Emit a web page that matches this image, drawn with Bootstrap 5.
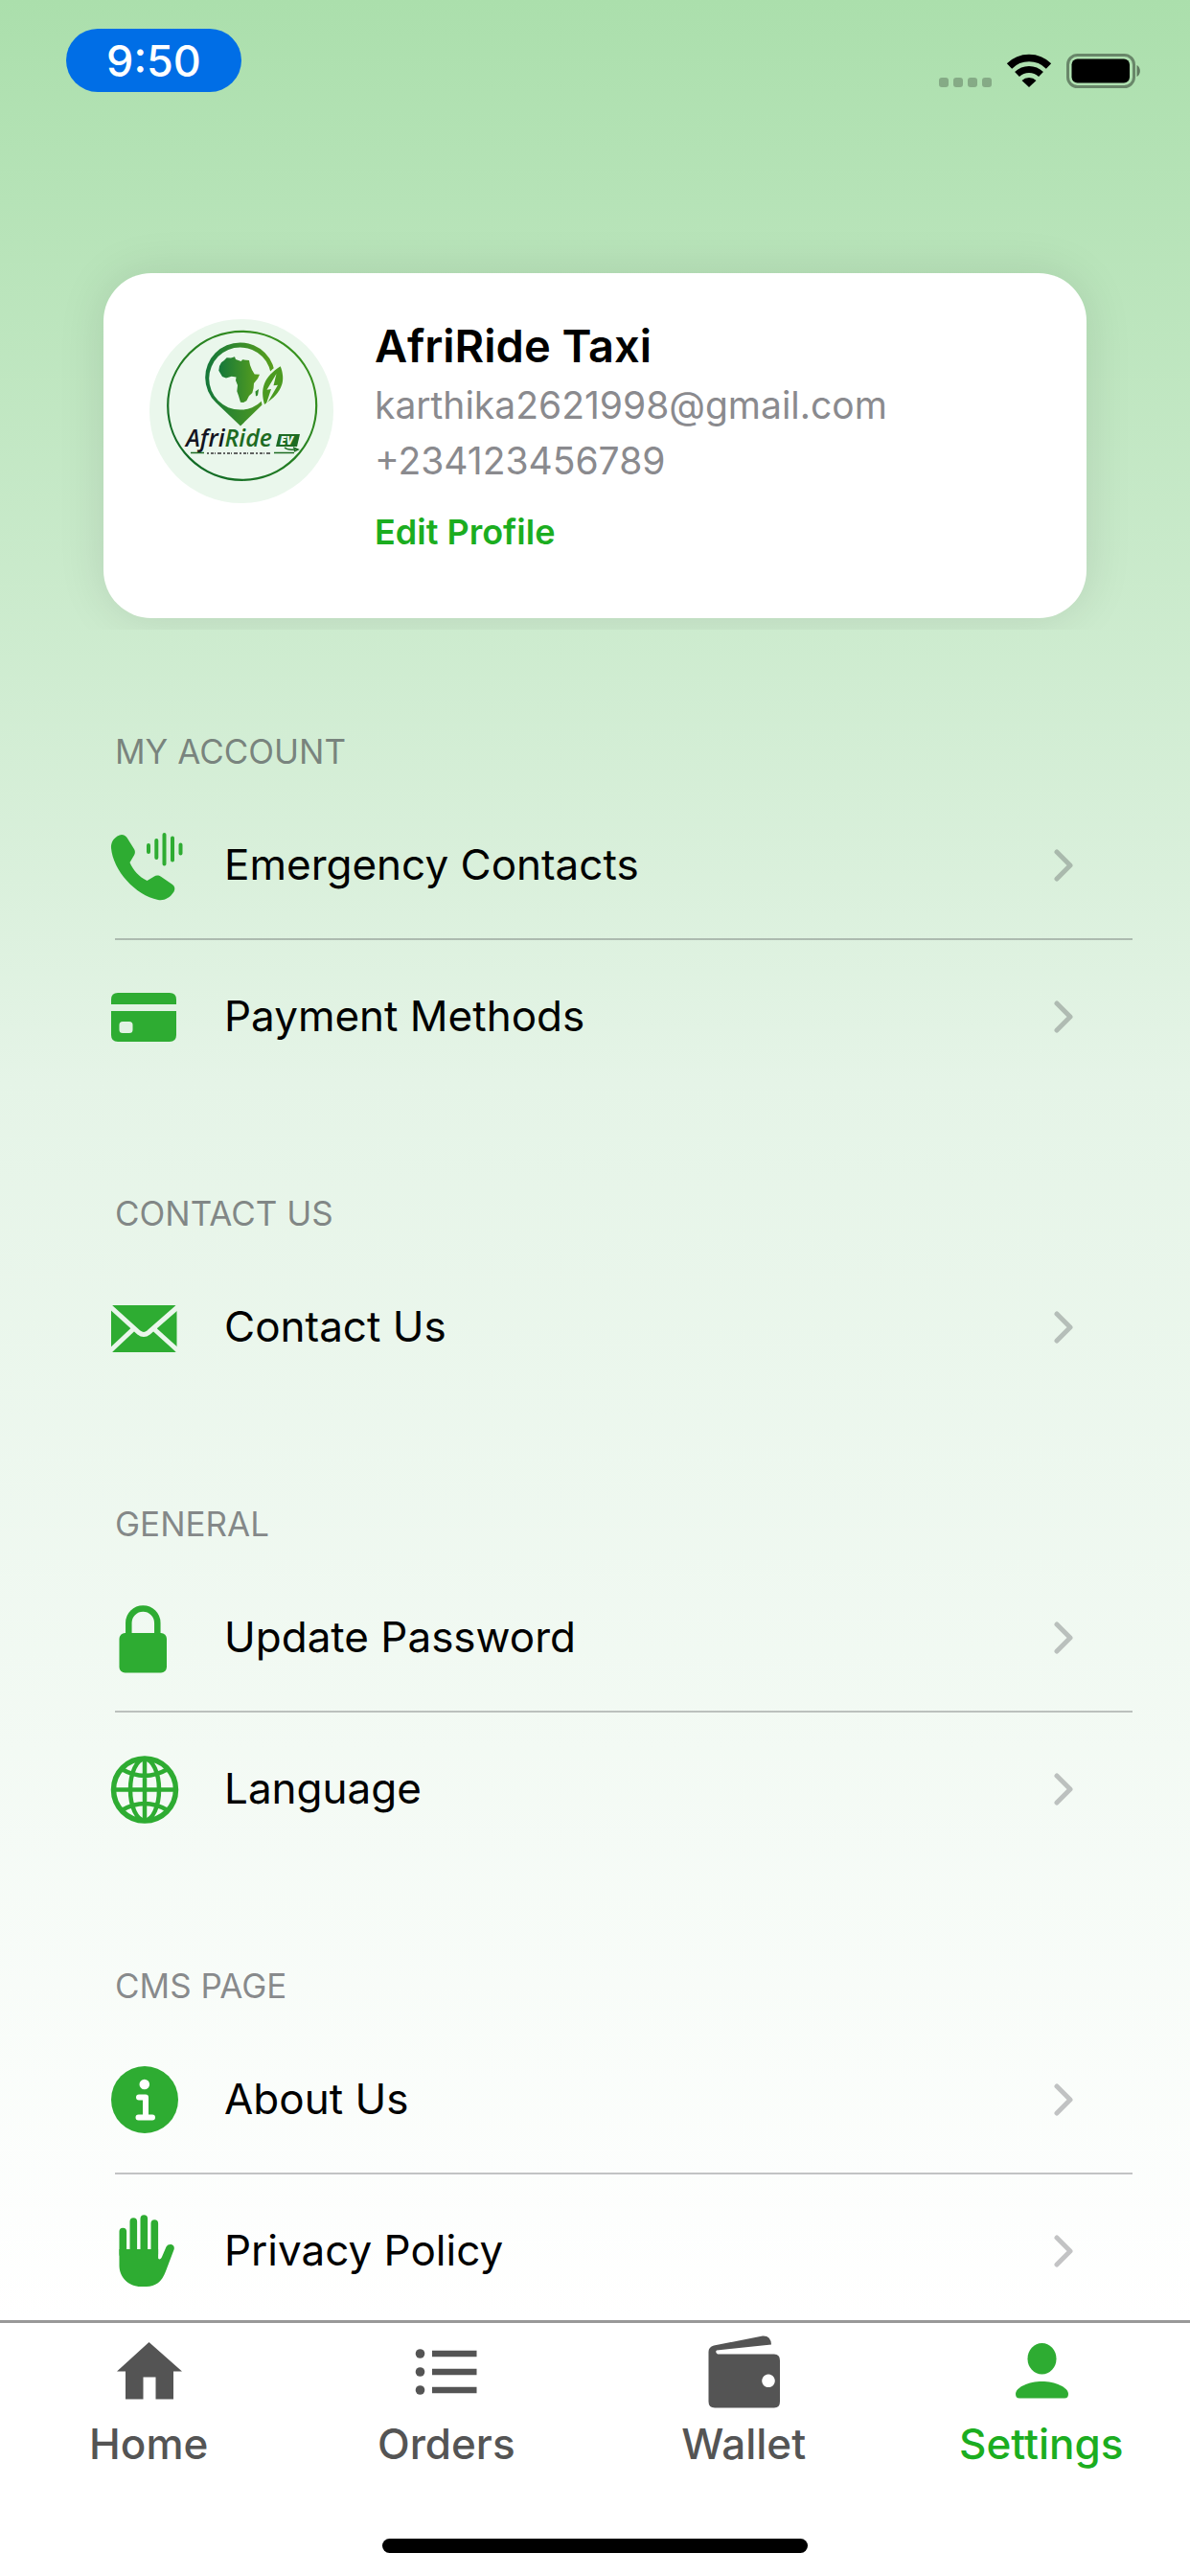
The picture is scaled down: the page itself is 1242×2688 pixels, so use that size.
<!DOCTYPE html>
<html lang="en">
<head>
  <meta charset="UTF-8" />
  <title>Settings - AfriRide Taxi</title>
  <meta name="viewport" content="width=device-width, initial-scale=1">
  <link href="https://cdn.jsdelivr.net/npm/bootstrap@5.3.3/dist/css/bootstrap.min.css" rel="stylesheet">
  <style>
    body {
      min-height: 100vh;
      font-family: Inter, "Liberation Sans", sans-serif;
      color: #000;
      background: linear-gradient(#abdfac 0%, #e5f4e7 42%, #ffffff 90%) no-repeat;
    }
    a { text-decoration: none; }
    svg { display: block; flex: none; }

    .status-bar { height: 125px; padding: 30px 52px 0 69px; }
    .time-pill { width: 183px; height: 66px; background: #006ee6; font-size: 45px; line-height: 67px; font-weight: 500; }
    .status-icons { gap: 15px; margin-top: 26px; }

    .profile-wrap { padding: 160px 108px 12px; overflow: hidden; }
    .profile-card { border-radius: 50px; padding: 48px 48px 68px; gap: 43px; box-shadow: 0 0 50px rgba(0, 0, 0, .1); }
    .profile-name { font-size: 47px; line-height: 56px; font-weight: 600; margin-bottom: 5px; }
    .profile-line { font-size: 39px; line-height: 58px; color: #8a8a8e; }
    .edit-link { font-size: 36px; line-height: 44px; font-weight: 600; color: #1bad20; margin-top: 23px; }

    .group-title { height: 166px; padding: 0 120px 17px; font-size: 35px; line-height: 44px; font-weight: 400; color: rgba(60, 60, 67, .6); }
    .menu-list { padding: 0 60px 0 111px; }
    .menu-row { height: 158px; padding-right: 61px; gap: 43px; font-size: 44px; line-height: 56px; color: #000; }
    .menu-line { height: 2px; margin: -2px 0 0 9px; background: rgba(60, 60, 67, .3); }
    .menu-icon { width: 80px; height: 80px; color: #2eac32; }
    .chevron { color: rgba(60, 60, 67, .3); }

    .page-end { height: 240px; }
    .tab-bar { border-top: 3px solid #999; background: #fff; padding-top: 10px; }
    .tab-link { color: #545454; font-size: 44px; line-height: 54px; font-weight: 500; gap: 9px; }
    .tab-link.active { color: #2eac32; }
    .tab-link.active span { color: #1bad20; }
    .home-line { width: 444px; height: 15px; margin: 72px auto 24px; background: #000; }
  </style>
</head>
<body>
  <header class="status-bar d-flex justify-content-between align-items-start">
    <div class="time-pill rounded-pill text-white text-center">9:50</div>
    <div class="status-icons d-flex align-items-end">
      <svg width="55" height="36" viewBox="0 0 55 36" fill="#000" fill-opacity=".24">
        <rect x="0" y="25" width="10" height="10" rx="3"/><rect x="15" y="25" width="10" height="10" rx="3"/>
        <rect x="30" y="25" width="10" height="10" rx="3"/><rect x="45" y="25" width="10" height="10" rx="3"/>
      </svg>
      <svg width="48" height="36" viewBox="0 0 48 36">
        <path d="M3.500 13 A29 29 0 0 1 44.500 13" fill="none" stroke="#000" stroke-width="7.500"/>
        <path d="M11.500 21.500 A18 18 0 0 1 36.500 21.500" fill="none" stroke="#000" stroke-width="7"/>
        <path d="M24 35 L16.500 28 A11 11 0 0 1 31.500 28 Z"/>
      </svg>
      <svg width="77" height="36" viewBox="0 0 77 36">
        <rect x="1.500" y="1.500" width="69" height="33" rx="10" fill="none" stroke="#000" stroke-opacity=".4" stroke-width="3"/>
        <rect x="5.500" y="5.500" width="60.500" height="25" rx="6"/>
        <path d="M73.500 12 C78 14 78 22 73.500 24 Z" fill-opacity=".45"/>
      </svg>
    </div>
  </header>

  <main>
    <section class="profile-wrap">
      <div class="profile-card bg-white d-flex align-items-start">
        <svg width="192" height="192" viewBox="0 0 192 192" role="img" aria-label="AfriRide EV logo">
          <defs>
            <linearGradient id="leafGreen" x1="0" y1="0" x2="1" y2="0">
              <stop offset="0" stop-color="#14773a"/><stop offset="1" stop-color="#5aa01c"/>
            </linearGradient>
            <linearGradient id="ringGreen" x1="0" y1="1" x2="1" y2="0">
              <stop offset="0" stop-color="#0b6428"/><stop offset="1" stop-color="#3f9a1c"/>
            </linearGradient>
          </defs>
          <circle cx="96" cy="96" r="96" fill="#eaf7ec"/>
          <circle cx="96.700" cy="90.300" r="77.500" fill="none" stroke="url(#ringGreen)" stroke-width="2.200"/>
          <!-- map pin -->
          <path fill="url(#leafGreen)" fill-rule="evenodd" d="M95 111.500 L69.300 87.100 A36.500 36.500 0 1 1 120.100 87.100 Z M94.700 29.600 A32.500 32.500 0 1 0 94.700 94.600 A32.500 32.500 0 1 0 94.700 29.600 Z"/>
          <path fill="url(#leafGreen)" d="M72.300 53.700 L73 49 L75 45.300 L78 43 L80.700 40.300 L85 40.500 L89 39.300 L90 42 L95.700 44 L97 42.300 L104 43 L105 48 L107 53 L109.700 57.400 L115 57.700 L113 62 L109 67 L108.600 72 L107.300 77 L104 80 L101.300 85.300 L98 87 L95 86.700 L93 80 L91.300 75.300 L92 69 L90 64 L90.500 60.500 L85.700 59.700 L80 61.500 L76 60 Z"/>
          <path fill="#2e8a2c" d="M110.500 75.500 L114 73 L113 79.500 L111 80.500 Z"/>
          <path d="M136.700 49.300 C142 63 140 76 120 89 C115 72 120 60 136.700 49.300 Z" fill="#4a9a20" stroke="#eaf7ec" stroke-width="5" paint-order="stroke"/>
          <path d="M132.500 57 L122.500 73.700 L127 73 L121 91 L134 68.700 L129.500 69.300 Z" fill="#eaf7ec"/>
          <!-- wordmark -->
          <text x="38" y="133" font-family="Open Sans, sans-serif" font-size="25" font-style="italic" font-weight="600" fill="#141421">Afri<tspan fill="#1d6b22">Ride</tspan></text>
          <path d="M135 120 H157 L154 133 H132 Z" fill="#1d6b22"/>
          <text x="136" y="131" font-family="Open Sans, sans-serif" font-size="12" font-style="italic" font-weight="800" fill="#eaf7ec">EV</text>
          <path d="M141 134 Q144 137 152 136 M150 134 L155 136 L151 138" fill="none" stroke="#1d6b22" stroke-width="1.500"/>
          <path d="M43 139.500 H57 M130 139.500 H151" stroke="#1d6b22" stroke-width="1.500"/>
          <path d="M60 140 H127" stroke="#333" stroke-width="1.500" stroke-dasharray="2 2 3 1 1 2 4 2"/>
        </svg>
        <div>
          <h1 class="profile-name">AfriRide Taxi</h1>
          <div class="profile-line">karthika2621998@gmail.com</div>
          <div class="profile-line">+234123456789</div>
          <a href="#edit" class="edit-link d-block">Edit Profile</a>
        </div>
      </div>
    </section>

    <section>
      <h2 class="group-title d-flex align-items-end m-0">MY ACCOUNT</h2>
      <div class="menu-list">
        <a href="#emergency" class="menu-row d-flex align-items-center">
          <svg class="menu-icon" viewBox="0 0 80 80" fill="currentColor">
            <path d="M11.500 10.500 C15 8 19 8.500 21.500 12 L29 24 C30.200 26 30.200 28 29.200 30 L24.500 38 C28 46 34 53 42.500 57 L50 52.500 C52 51 55 51.300 57 52.800 L69 61 C71.500 63 72 65.500 70.500 68.500 C66 75.500 60 78 54 77 C30 72 7 46 5 23 C4.600 17.500 7 13.500 11.500 10.500 Z"/>
            <path d="M44 20 V27 M52.300 15 V33 M60.500 9 V39.500 M69 12.500 V35.500 M77.500 19.500 V28.500" fill="none" stroke="currentColor" stroke-width="4" stroke-linecap="round"/>
          </svg>
          <span class="flex-grow-1">Emergency Contacts</span>
          <svg class="chevron" width="22" height="36" viewBox="0 0 22 36"><path d="M4 5 L18 19 L4 33" fill="none" stroke="currentColor" stroke-width="5" stroke-linecap="round" stroke-linejoin="round"/></svg>
        </a>
        <div class="menu-line"></div>
        <a href="#payment" class="menu-row d-flex align-items-center">
          <svg class="menu-icon" viewBox="0 0 80 80" fill="currentColor">
            <path d="M5 28 V23 Q5 16 12 16 H66 Q73 16 73 23 V28 Z"/>
            <path fill-rule="evenodd" d="M5 35 H73 V60 Q73 67 66 67 H12 Q5 67 5 60 Z M17 46 Q13.500 46 13.500 49.500 V54.500 Q13.500 58 17 58 H24 Q27.500 58 27.500 54.500 V49.500 Q27.500 46 24 46 Z"/>
          </svg>
          <span class="flex-grow-1">Payment Methods</span>
          <svg class="chevron" width="22" height="36" viewBox="0 0 22 36"><path d="M4 5 L18 19 L4 33" fill="none" stroke="currentColor" stroke-width="5" stroke-linecap="round" stroke-linejoin="round"/></svg>
        </a>
      </div>
    </section>

    <section>
      <h2 class="group-title d-flex align-items-end m-0">CONTACT US</h2>
      <div class="menu-list">
        <a href="#contact" class="menu-row d-flex align-items-center">
          <svg class="menu-icon" viewBox="0 0 80 80" fill="currentColor">
            <mask id="mailFolds">
              <rect width="80" height="80" fill="#fff"/>
              <path d="M3 18.500 L34 46.500 Q39 50.500 44 46.500 L76 18.500 M3 66.500 L28 43 M76 66.500 L50 43" fill="none" stroke="#000" stroke-width="5"/>
            </mask>
            <rect x="5" y="18" width="68.500" height="49" rx="2" mask="url(#mailFolds)"/>
          </svg>
          <span class="flex-grow-1">Contact Us</span>
          <svg class="chevron" width="22" height="36" viewBox="0 0 22 36"><path d="M4 5 L18 19 L4 33" fill="none" stroke="currentColor" stroke-width="5" stroke-linecap="round" stroke-linejoin="round"/></svg>
        </a>
      </div>
    </section>

    <section>
      <h2 class="group-title d-flex align-items-end m-0">GENERAL</h2>
      <div class="menu-list">
        <a href="#password" class="menu-row d-flex align-items-center">
          <svg class="menu-icon" viewBox="0 0 80 80" fill="currentColor">
            <rect x="13.500" y="36" width="49.500" height="41.500" rx="6"/>
            <path d="M23.300 38 V25.500 a15 15 0 0 1 30 0 V38" fill="none" stroke="currentColor" stroke-width="6.500"/>
          </svg>
          <span class="flex-grow-1">Update Password</span>
          <svg class="chevron" width="22" height="36" viewBox="0 0 22 36"><path d="M4 5 L18 19 L4 33" fill="none" stroke="currentColor" stroke-width="5" stroke-linecap="round" stroke-linejoin="round"/></svg>
        </a>
        <div class="menu-line"></div>
        <a href="#language" class="menu-row d-flex align-items-center">
          <svg class="menu-icon" viewBox="0 0 80 80" fill="none" stroke="currentColor" stroke-width="4.500">
            <circle cx="40" cy="41.500" r="32.500" stroke-width="5.500"/>
            <ellipse cx="40" cy="41.500" rx="15" ry="32"/>
            <path d="M40 9 V74 M8 41.500 H72 M16 20 Q40 34 64 20 M16 63 Q40 49 64 63"/>
          </svg>
          <span class="flex-grow-1">Language</span>
          <svg class="chevron" width="22" height="36" viewBox="0 0 22 36"><path d="M4 5 L18 19 L4 33" fill="none" stroke="currentColor" stroke-width="5" stroke-linecap="round" stroke-linejoin="round"/></svg>
        </a>
      </div>
    </section>

    <section>
      <h2 class="group-title d-flex align-items-end m-0">CMS PAGE</h2>
      <div class="menu-list">
        <a href="#about" class="menu-row d-flex align-items-center">
          <svg class="menu-icon" viewBox="0 0 80 80" fill="currentColor">
            <circle cx="40" cy="41" r="35"/>
            <circle cx="39.800" cy="25" r="5.300" fill="#fff"/>
            <path d="M34 38.500 H41 V59 M33.500 59.500 H48" fill="none" stroke="#fff" stroke-width="6" stroke-linecap="round" stroke-linejoin="round"/>
          </svg>
          <span class="flex-grow-1">About Us</span>
          <svg class="chevron" width="22" height="36" viewBox="0 0 22 36"><path d="M4 5 L18 19 L4 33" fill="none" stroke="currentColor" stroke-width="5" stroke-linecap="round" stroke-linejoin="round"/></svg>
        </a>
        <div class="menu-line"></div>
        <a href="#privacy" class="menu-row d-flex align-items-center">
          <svg class="menu-icon" viewBox="0 0 80 80" fill="currentColor">
            <path d="M17.300 20.500 V44 M28.300 10 V44 M39.300 7 V44 M50.300 12 V44" fill="none" stroke="currentColor" stroke-width="7.600" stroke-linecap="round"/>
            <path d="M13.500 39 H54.100 V48 C54.100 50 57 50 58 47 L62.500 36.500 C65 32 72 34 70.700 39 L62 62 C58 73 51 78 42 78 H36 C23 78 13.500 68 13.500 56 Z"/>
          </svg>
          <span class="flex-grow-1">Privacy Policy</span>
          <svg class="chevron" width="22" height="36" viewBox="0 0 22 36"><path d="M4 5 L18 19 L4 33" fill="none" stroke="currentColor" stroke-width="5" stroke-linecap="round" stroke-linejoin="round"/></svg>
        </a>
      </div>
    </section>
    <div class="page-end"></div>
  </main>

  <nav class="tab-bar fixed-bottom">
    <div class="row g-0">
      <a href="#home" class="tab-link col d-flex flex-column align-items-center">
        <svg width="80" height="80" viewBox="0 0 80 80" fill="currentColor"><path d="M40.500 10 L75 40.500 H66 V69.500 H47.500 V46.500 H34.500 V69.500 H16 V40.500 H7 Z"/></svg>
        <span>Home</span>
      </a>
      <a href="#orders" class="tab-link col d-flex flex-column align-items-center">
        <svg width="80" height="80" viewBox="0 0 80 80" fill="currentColor">
          <circle cx="12.500" cy="22" r="4.800"/><circle cx="12.500" cy="41" r="4.800"/><circle cx="12.500" cy="60" r="4.800"/>
          <path d="M25 22 H71.500 M25 41 H71.500 M25 60 H71.500" stroke="currentColor" stroke-width="6.500"/>
        </svg>
        <span>Orders</span>
      </a>
      <a href="#wallet" class="tab-link col d-flex flex-column align-items-center">
        <svg width="80" height="80" viewBox="0 0 80 80" fill="currentColor">
          <path fill-rule="evenodd" d="M3.500 20 Q3.500 15 9 13.500 L60 3.500 Q68.500 3 69 12.500 L12 18.500 Q10 20.500 13 22.500 H72 Q78 22.500 78 29 V72 Q78 78.500 72 78.500 H10 Q3.500 78.500 3.500 72 Z M66 43.500 a6.800 6.800 0 1 0 0.010 0 Z"/>
        </svg>
        <span>Wallet</span>
      </a>
      <a href="#settings" class="tab-link active col d-flex flex-column align-items-center" aria-current="page">
        <svg width="80" height="80" viewBox="0 0 80 80" fill="currentColor">
          <ellipse cx="40.500" cy="27.300" rx="15" ry="16.300"/>
          <path d="M13 64 C13 57 27 51 40.500 51 C54 51 68 57 68 64 Q68 68.500 64 68.500 H17 Q13 68.500 13 64 Z"/>
        </svg>
        <span>Settings</span>
      </a>
    </div>
    <div class="home-line rounded-pill"></div>
  </nav>

  <script src="https://cdn.jsdelivr.net/npm/bootstrap@5.3.3/dist/js/bootstrap.bundle.min.js"></script>
</body>
</html>
